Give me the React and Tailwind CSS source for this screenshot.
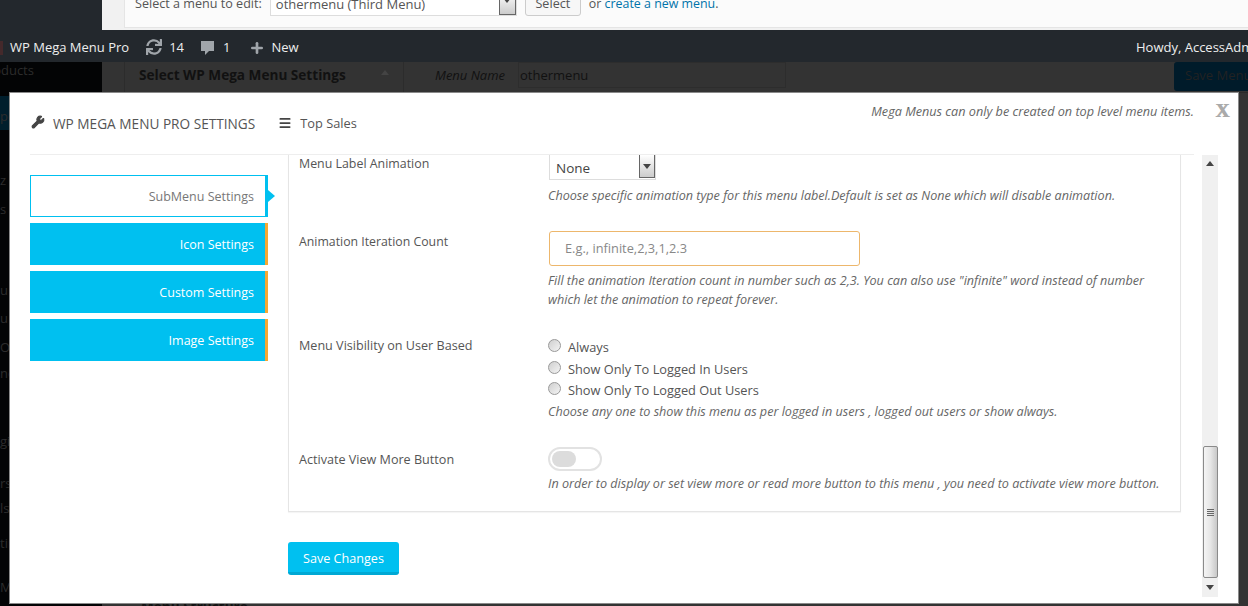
import { Wrench, Menu, Plus } from "lucide-react"
import { FaSync } from "react-icons/fa"

const tabs = ["Icon Settings", "Custom Settings", "Image Settings"]

// letters of the admin menu that stick out left of the modal
const sideBits = [
  ["z", "mt-[42px]"],
  ["s", "mt-[13px]"],
  ["u", "mt-[65px]"],
  ["u", "mt-[12px]"],
  ["O", "mt-[13px]"],
  ["ne", "mt-[10px]"],
  ["gi", "mt-[52px]"],
  ["rs", "mt-[26px]"],
  ["ls", "mt-[9px]"],
  ["tir", "mt-[19px]"],
  ["M", "mt-[28px]"],
]

function Radio({ label }) {
  return (
    <label className="flex items-center h-[21.5px] text-[12.8px] text-[#555] -ml-[1px]">
      <span className="w-[13px] h-[13px] rounded-full border border-[#999] bg-gradient-to-br from-[#cfcfcf] to-[#f4f4f4] mr-[7px] -mt-[4px]" />
      {label}
    </label>
  )
}

function Hint({ children }) {
  return <p className="italic text-[12.6px] leading-[19px] text-[#666] -ml-[1px]">{children}</p>
}

function Arrow({ up }) {
  return (
    <svg width="8" height="5" viewBox="0 0 8 5" className="text-[#444]">
      <path d={up ? "M4 0 L8 5 L0 5 Z" : "M0 0 L8 0 L4 5 Z"} fill="currentColor" />
    </svg>
  )
}

export default function App() {
  return (
    <div className="relative w-[1248px] h-[606px] overflow-hidden bg-[#333] font-['Open_Sans',sans-serif]">
      {/* page behind the modal */}
      <div className="flex h-[30px]">
        <div className="w-[102px] bg-[#23282d]" />
        <div className="flex-1 bg-[#f1f1f1] pl-[22px]">
          <div className="h-[28px] bg-[#fbfbfb] border-l border-b border-[#e5e5e5] flex items-end text-[12.6px] text-[#555] pl-[10px] pb-[11px]">
            <span className="leading-[16px] mb-[4px]">Select a menu to edit:</span>
            <span className="ml-[8px] w-[247px] h-[26px] bg-white border border-[#ddd] px-[5px] pt-[5px] text-[13px] leading-[16px] relative">
              othermenu (Third Menu)
              <span className="absolute right-0 bottom-0 w-[17px] h-[24px] bg-gradient-to-b from-white to-[#ccc] border border-[#666] flex items-end justify-center pb-[11px]">
                <Arrow />
              </span>
            </span>
            <span className="ml-[8px] w-[56px] h-[26px] pt-[5px] bg-[#f7f7f7] border border-[#ccc] rounded-[3px] text-center leading-[16px]">Select</span>
            <span className="ml-[8px] leading-[16px] mb-[4px] text-[12.4px]">or <span className="text-[#0073aa]">create a new menu</span>.</span>
          </div>
        </div>
      </div>

      <div className="h-[32px] pt-[3px] bg-[#23282d] flex items-center text-[13px] text-[#eee]">
        <span className="w-[3px] h-[14px] bg-[#5a2a2a] opacity-60" />
        <span className="ml-[7px]">WP Mega Menu Pro</span>
        <FaSync size={16} className="ml-[17px] -mt-[2px] text-[#a0a5aa]" />
        <span className="ml-[7px]">14</span>
        <svg width="15" height="16" viewBox="0 0 15 16" className="ml-[16px] text-[#a0a5aa]">
          <path d="M1 1 H14 V11 H9 L5 15 V11 H1 Z" fill="currentColor" />
        </svg>
        <span className="ml-[8px]">1</span>
        <Plus size={16} strokeWidth={4} className="ml-[19px] text-[#a0a5aa]" />
        <span className="ml-[6px]">New</span>
        <span className="ml-auto pl-[8px] w-[120px] whitespace-nowrap overflow-hidden">Howdy, AccessAdmin</span>
      </div>

      <div className="flex h-[544px]">
        <div className="w-[102px] bg-[#030405] text-[13px] text-[#2c2c2c] overflow-hidden leading-[16px]">
          <div className="-ml-[20px] whitespace-nowrap">Products</div>
          <div className="mt-[18px] h-[34px] bg-[#001e2c] pt-[12px]">pe</div>
          {sideBits.map(([t, m], i) => (
            <div key={i} className={m}>{t}</div>
          ))}
        </div>
        <div className="flex-1 pl-[22px] pr-0 text-[#111]">
          <div className="flex h-[31px] border-b border-[#2a2a2a]">
            <div className="w-[280px] border-x border-[#2c2c2c] pl-[14px] pt-[3px] text-[13.6px] font-bold leading-[20px] flex justify-between pr-[14px]">
              Select WP Mega Menu Settings
              <span className="pt-[5px]"><Arrow up /></span>
            </div>
            <span className="ml-[31px] mt-[4px] italic text-[13px] leading-[18px]">Menu Name</span>
            <span className="ml-[13px] w-[268px] h-[26px] border border-[#2d2d2d] px-[1px] text-[13px] leading-[24px] mt-0">othermenu</span>
            <span className="ml-auto w-[74px] h-[29px] bg-[#001b2a] rounded-l-[3px] pl-[11px] text-[13px] leading-[26px] text-[#222] overflow-hidden whitespace-nowrap">Save Menu</span>
          </div>
          <div className="mt-[505px] ml-[17px] text-[13.6px] font-bold leading-[18px]">Menu Structure</div>
        </div>
      </div>

      {/* modal */}
      <div className="absolute left-[9px] top-[92px] w-[1230px] h-[512px] bg-white border border-[#8a8a8a] flex flex-col">
        <div className="h-[62px] ml-[20px] mr-[44px] shrink-0 border-b border-[#eee] relative flex items-center">
          <Wrench size={14} fill="#444" className="text-[#444] -mt-[3px] ml-[1px]" />
          <span className="ml-[8px] text-[13.65px] text-[#555] mt-[1px]">WP MEGA MENU PRO SETTINGS</span>
          <Menu size={14} strokeWidth={3} className="ml-[23px] text-[#444] -mt-[1px]" />
          <span className="ml-[8px] text-[12.8px] text-[#555] mt-[1px]">Top Sales</span>
          <span className="ml-auto self-start mt-[9px] italic text-[12.67px] text-[#666]">Mega Menus can only be created on top level menu items.</span>
        </div>
        <span className="absolute right-[9px] top-[8px] text-[19px] font-bold leading-[20px] text-[#aaa] font-['Liberation_Serif',serif] [text-shadow:1px_0_0_#aaa]">X</span>

        <div className="flex flex-1 min-h-0 pl-[20px]">
          <div className="w-[238px] shrink-0 pt-[20px] flex flex-col gap-[6px] text-[12.5px]">
            <div className="relative h-[42px] flex items-center justify-end bg-white border border-[#00c0f0] border-r-[3px] pr-[11px] pt-[3px] text-[#777]">
              SubMenu Settings
              <span className="absolute -right-[10px] top-[14px] border-y-[6px] border-y-transparent border-l-[7px] border-l-[#00c0f0]" />
            </div>
            {tabs.map((t) => (
              <div key={t} className="h-[42px] flex items-center justify-end bg-[#00c0f0] border-r-[3px] border-[#f5a833] pr-[11px] pt-[3px] text-white">{t}</div>
            ))}
          </div>

          <div className="ml-[20px] w-[893px] shrink-0 flex flex-col">
            <div className="h-[357px] border-l border-r border-b border-[#e5e5e5] shadow-[0_1px_1px_rgba(0,0,0,0.04)] overflow-hidden pl-[10px]">
              <div className="grid grid-cols-[250px_1fr] text-[12.6px] text-[#555]">
                <div className="leading-[18px] text-[12.4px]">Menu Label Animation</div>
                <div>
                  <div className="-mt-[1px] w-[107px] h-[26px] border border-[#ddd] border-t-0 text-[13.5px] pl-[6px] pt-[1px] leading-[26px] text-[#444] relative">
                    None
                    <span className="absolute right-0 top-0 w-[16px] h-[24px] bg-gradient-to-b from-white to-[#ccc] border border-[#666] flex items-center justify-center"><Arrow /></span>
                  </div>
                  <div className="mt-[6px]"><Hint>Choose specific animation type for this menu label.Default is set as None which will disable animation.</Hint></div>
                </div>

                <div className="mt-[26px] pt-[2px] leading-[18px] text-[12.3px]">Animation Iteration Count</div>
                <div className="mt-[26px]">
                  <div className="w-[311px] h-[35px] border border-[#edb76c] rounded-[3px] pl-[15px] text-[12.8px] leading-[33px] text-[#888]">E.g., infinite,2,3,1,2.3</div>
                  <div className="mt-[5px]"><Hint>Fill the animation Iteration count in number such as 2,3. You can also use "infinite" word instead of number<br />which let the animation to repeat forever.</Hint></div>
                </div>

                <div className="mt-[28px] leading-[18px]">Menu Visibility on User Based</div>
                <div className="mt-[28px]">
                  <Radio label="Always" />
                  <Radio label="Show Only To Logged In Users" />
                  <Radio label="Show Only To Logged Out Users" />
                  <Hint>Choose any one to show this menu as per logged in users , logged out users or show always.</Hint>
                </div>

                <div className="mt-[26px] leading-[18px] pt-[4px]">Activate View More Button</div>
                <div className="mt-[26px]">
                  <div className="w-[54px] h-[24px] -ml-[1px] rounded-full border-[2px] border-[#e2e2e2] flex items-center pl-[2px]">
                    <span className="w-[24px] h-[16px] rounded-full bg-[#dcdcdc]" />
                  </div>
                  <div className="mt-[3px]"><Hint>In order to display or set view more or read more button to this menu , you need to activate view more button.</Hint></div>
                </div>
              </div>
            </div>
            <button className="mt-[30px] w-[111px] h-[33px] pt-[5px] bg-[#00c0f0] border-b-[3px] border-[#00a8d4] rounded-[3px] text-[12.6px] text-white">Save Changes</button>
          </div>

          {/* scrollbar */}
          <div className="ml-[21px] w-[16px] h-[442px] bg-[#f0f0f0] flex flex-col items-center">
            <div className="h-[17px] flex items-center justify-center"><Arrow up /></div>
            <div className="flex-1" />
            <div className="w-[15px] h-[132px] border border-[#8a8a8a] rounded-[2px] bg-gradient-to-r from-[#f4f4f4] via-[#e6e6e6] to-[#c8c8c8] flex flex-col items-center justify-center gap-[1px]">
              <span className="w-[7px] h-px bg-[#666]" />
              <span className="w-[7px] h-px bg-[#666]" />
              <span className="w-[7px] h-px bg-[#666]" />
              <span className="w-[7px] h-px bg-[#666]" />
            </div>
            <div className="h-[19px] flex items-center justify-center"><Arrow /></div>
          </div>
        </div>
      </div>
    </div>
  )
}
